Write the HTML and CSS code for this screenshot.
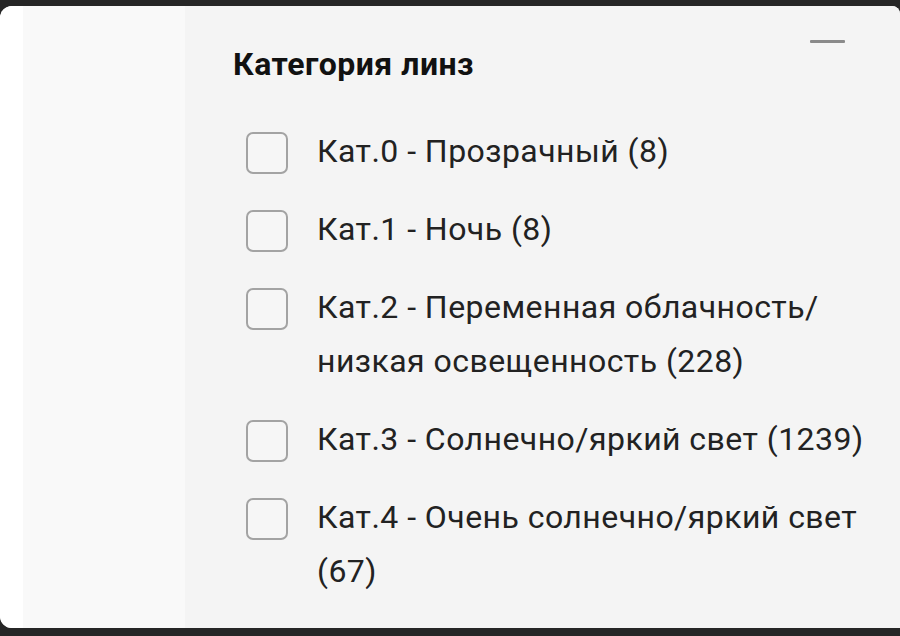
FILE: index.html
```
<!DOCTYPE html>
<html lang="ru">
<head>
<meta charset="utf-8">
<link rel="stylesheet" href="styles.css">
</head>
<body>
<div class="frame">
  <div class="side"><div class="side-edge"></div><div class="side-fill"></div></div>
  <section class="panel">
    <header class="head">
      <h2 class="title">Категория линз</h2>
      <span class="collapse" aria-label="Свернуть"></span>
    </header>
    <ul class="list">
      <li class="item"><span class="box"></span><span class="label">Кат.0 - Прозрачный (8)</span></li>
      <li class="item"><span class="box"></span><span class="label">Кат.1 - Ночь (8)</span></li>
      <li class="item"><span class="box"></span><span class="label">Кат.2 - Переменная облачность/<wbr>низкая освещенность (228)</span></li>
      <li class="item"><span class="box"></span><span class="label">Кат.3 - Солнечно/яркий свет (1239)</span></li>
      <li class="item"><span class="box"></span><span class="label">Кат.4 - Очень солнечно/яркий свет (67)</span></li>
    </ul>
  </section>
</div>
</body>
</html>
```
FILE: styles.css
```
html, body {
  margin: 0;
  padding: 0;
  height: 636px;
  overflow: hidden;
  background: #262626;
  font-family: Roboto, "Noto Sans", "DejaVu Sans", sans-serif;
}
.frame {
  margin-top: 6px;
  height: 622px;
  display: flex;
  border-radius: 12px 8px 0 12px;
  overflow: hidden;
  background: #fff;
}
.side {
  width: 185px;
  display: flex;
  flex-shrink: 0;
}
.side-edge {
  width: 23px;
  background: #ffffff;
}
.side-fill {
  flex: 1;
  background: #f9f9f9;
}
.panel {
  flex: 1;
  background: #f4f4f4;
  padding: 39px 12px 0 48px;
}
.head {
  display: flex;
  justify-content: space-between;
  align-items: flex-start;
  padding-right: 43px;
}
.title {
  margin: 0;
  font-size: 32px;
  line-height: 38px;
  font-weight: 700;
  letter-spacing: 0.5px;
  color: #111;
}
.collapse {
  display: block;
  width: 35px;
  height: 2.5px;
  margin-top: -5px;
  background: #8a8a8a;
  border-radius: 1px;
}
.list {
  list-style: none;
  margin: 41px 0 0 0;
  padding: 0;
  display: flex;
  flex-direction: column;
  gap: 24px;
}
.item {
  display: flex;
  align-items: flex-start;
  gap: 29px;
  padding-left: 13px;
}
.box {
  flex-shrink: 0;
  width: 38px;
  height: 38px;
  margin-top: 8px;
  border: 2px solid #a3a3a3;
  border-radius: 7px;
  background: #f6f6f6;
}
.label {
  font-size: 32px;
  line-height: 54px;
  letter-spacing: 0.45px;
  color: #222;
}
```
